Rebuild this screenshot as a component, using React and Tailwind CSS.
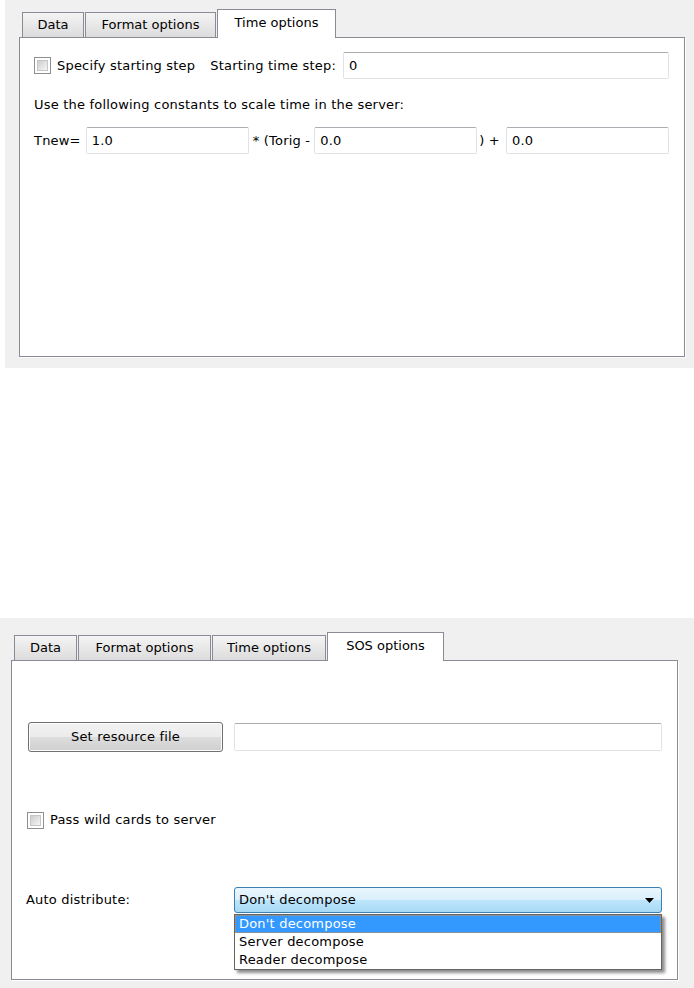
import React from "react";

const tabBase =
    "flex items-center justify-center border border-b-0 border-[#898c95] text-[13px] text-black";

const Tab = ({ label, width, active }) => {
    if (active) {
        return (
            <div
                className={`${tabBase} ${width} h-[29px] bg-white relative z-10 -mb-px pb-[3px]`}
            >
                {label}
            </div>
        );
    }
    return (
        <div
            className={`${tabBase} ${width} h-[25px] bg-linear-to-b from-[#f4f4f4] to-[#dcdcdc]`}
        >
            {label}
        </div>
    );
};

const CheckBox = () => (
    <div className="w-[17px] h-[17px] shrink-0 border border-[#8e8f8f] bg-white p-[2px]">
        <div className="w-full h-full bg-linear-to-br from-[#cdcdcd] to-[#f6f6f6] border border-[#c6c6c6]" />
    </div>
);

const TextInput = ({ value, className = "" }) => (
    <div
        className={`h-[27px] flex items-center pl-[5px] bg-white rounded-[2px] border border-[#dfe3e8] border-t-[#abadb3] text-[13px] text-black ${className}`}
    >
        {value}
    </div>
);

const TimeOptions = () => (
    <div className="ml-[5px] w-[689px] h-[368px] bg-[#f0f0f0] pt-[9px] pl-[14px]">
        <div className="flex items-end h-[28px] pl-[3px] gap-px">
            <Tab label="Data" width="w-[62px]" />
            <Tab label="Format options" width="w-[131px]" />
            <Tab label="Time options" width="w-[119px]" active />
        </div>
        <div className="w-[666px] h-[320px] bg-white border border-[#898c95] shadow-[1px_1px_0_#ffffff] pt-[14px] pl-[14px] pr-[15px] tracking-[0.2px]">
            <div className="flex items-center h-[27px]">
                <CheckBox />
                <span className="ml-[6px] text-[13px]">Specify starting step</span>
                <span className="ml-[15px] text-[13px]">Starting time step:</span>
                <TextInput value="0" className="ml-[7px] flex-1" />
            </div>
            <div className="mt-[18px] h-[16px] flex items-center text-[13px]">
                Use the following constants to scale time in the server:
            </div>
            <div className="mt-[14px] flex items-center h-[27px] text-[13px]">
                <span>Tnew=</span>
                <TextInput value="1.0" className="ml-[5px] flex-1" />
                <span className="ml-[4px]">* (Torig -</span>
                <TextInput value="0.0" className="ml-[4px] flex-1" />
                <span className="ml-[2px]">) +</span>
                <TextInput value="0.0" className="ml-[6px] flex-1" />
            </div>
        </div>
    </div>
);

const SosOptions = () => (
    <div className="w-[694px] h-[370px] bg-[#f0f0f0] pt-[14px] pl-[11px]">
        <div className="flex items-end h-[28px] pl-[3px] gap-px">
            <Tab label="Data" width="w-[63px]" />
            <Tab label="Format options" width="w-[133px]" />
            <Tab label="Time options" width="w-[114px]" />
            <Tab label="SOS options" width="w-[117px]" active />
        </div>
        <div className="relative w-[667px] h-[320px] bg-white border border-[#898c95] shadow-[1px_1px_0_#ffffff] pt-[61px] pl-[16px] pr-[15px] text-[13px] tracking-[0.2px]">
            <div className="flex items-center h-[30px]">
                <div className="w-[195px] h-[30px] flex items-center justify-center rounded-[3px] border border-[#707070] bg-[linear-gradient(#f2f2f2_0%,#ebebeb_50%,#dddddd_50%,#cfcfcf_100%)] shadow-[inset_0_0_0_1px_#fcfcfc]">
                    Set resource file
                </div>
                <TextInput value="" className="ml-[11px] flex-1 h-[28px]" />
            </div>
            <div className="mt-[59px] -ml-px flex items-center h-[18px]">
                <CheckBox />
                <span className="ml-[6px]">Pass wild cards to server</span>
            </div>
            <div className="mt-[58px] flex items-center h-[26px]">
                <span className="-ml-[2px] w-[208px]">Auto distribute:</span>
                <div className="relative flex-1">
                    <div className="h-[26px] flex items-center justify-between pl-[4px] pr-[7px] rounded-[3px] border border-[#3c7fb1] bg-[linear-gradient(#eaf6fd_0%,#d9f0fc_50%,#bee6fd_50%,#a7d9f5_100%)]">
                        <span>Don't decompose</span>
                        <svg width="9" height="5" viewBox="0 0 9 5">
                            <path d="M0 0 H9 L4.5 5 Z" fill="#000" />
                        </svg>
                    </div>
                    <div className="absolute left-0 right-0 top-[27px] z-20 bg-white border border-[#646464] shadow-[3px_3px_3px_rgba(0,0,0,0.45)]">
                        <div className="h-[18px] flex items-center pl-[3px] bg-[#3399ff] text-white border border-dotted border-[#d98c3c]">
                            Don't decompose
                        </div>
                        <div className="h-[18px] flex items-center pl-[4px]">
                            Server decompose
                        </div>
                        <div className="h-[18px] flex items-center pl-[4px]">
                            Reader decompose
                        </div>
                    </div>
                </div>
            </div>
        </div>
    </div>
);

export default function App() {
    return (
        <div className="w-[694px] h-[988px] bg-white font-['DejaVu_Sans',sans-serif] text-black">
            <TimeOptions />
            <div className="h-[250px]" />
            <SosOptions />
        </div>
    );
}
